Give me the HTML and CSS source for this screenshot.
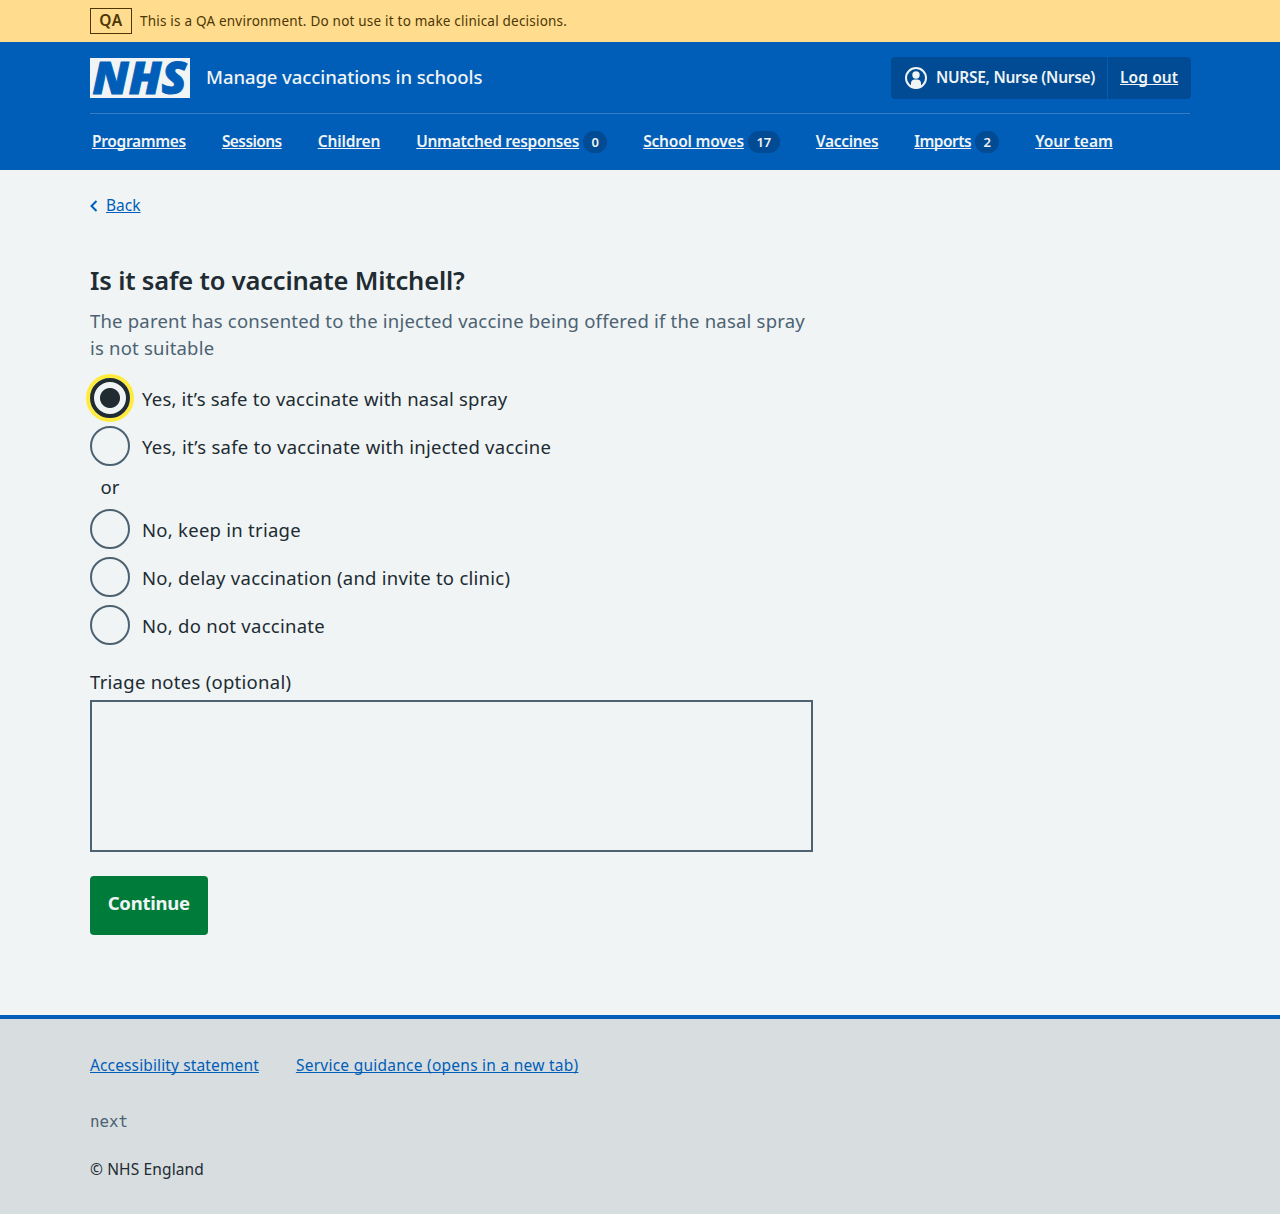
FILE: index.html
```html
<!DOCTYPE html>
<html lang="en">
<head>
<meta charset="utf-8">
<title>Is it safe to vaccinate Mitchell?</title>
<link rel="stylesheet" href="styles.css">
</head>
<body>
<div class="env-banner">
  <div class="container env-inner">
    <strong class="env-tag">QA</strong>
    <span class="env-text">This is a QA environment. Do not use it to make clinical decisions.</span>
  </div>
</div>
<header class="header">
  <div class="container">
    <div class="header-top">
      <svg class="logo" viewBox="0 0 100 40" width="100" height="40" role="img" aria-label="NHS">
        <rect width="100" height="40" fill="#f0f4f5"/>
        <text class="logo-text" x="2.500" y="36" textLength="94" lengthAdjust="spacingAndGlyphs">NHS</text>
      </svg>
      <span class="service-name">Manage vaccinations in schools</span>
      <div class="account">
        <div class="account-user">
          <svg class="account-icon" viewBox="0 0 24 24" width="24" height="24" aria-hidden="true">
            <defs><clipPath id="disc"><circle cx="12" cy="12" r="10.5"/></clipPath></defs>
            <circle cx="12" cy="12" r="10" fill="none" stroke="#f0f4f5" stroke-width="2"/>
            <circle cx="12" cy="9" r="3.7" fill="#f0f4f5"/>
            <path d="M7 24v-6.500a4 4 0 0 1 4-4h2a4 4 0 0 1 4 4V24z" fill="#f0f4f5" clip-path="url(#disc)"/>
          </svg>
          <span class="user-name">NURSE, Nurse (Nurse)</span>
        </div>
        <a class="logout" href="#">Log out</a>
      </div>
    </div>
    <nav class="nav">
      <div class="nav-item"><a class="nav-programmes" href="#">Programmes</a></div>
      <div class="nav-item"><a class="nav-sessions" href="#">Sessions</a></div>
      <div class="nav-item"><a class="nav-children" href="#">Children</a></div>
      <div class="nav-item"><a class="nav-responses" href="#">Unmatched responses</a><span class="count">0</span></div>
      <div class="nav-item"><a class="nav-moves" href="#">School moves</a><span class="count count-wide">17</span></div>
      <div class="nav-item"><a class="nav-vaccines" href="#">Vaccines</a></div>
      <div class="nav-item"><a class="nav-imports" href="#">Imports</a><span class="count">2</span></div>
      <div class="nav-item"><a class="nav-team" href="#">Your team</a></div>
    </nav>
  </div>
</header>
<div class="container page">
  <a class="back" href="#">
    <svg viewBox="0 0 8 12" width="8" height="12" aria-hidden="true"><path d="M6.500 1 1.500 6l5 5" fill="none" stroke="#005eb8" stroke-width="2"/></svg>
    <span class="back-text">Back</span>
  </a>
  <main class="main">
    <h1 class="title">Is it safe to vaccinate Mitchell?</h1>
    <p class="hint">The parent has consented to the injected vaccine being offered if the nasal spray<br>is not suitable</p>
    <div class="radios">
      <label class="radio"><span class="dot dot-on"></span><span class="radio-label radio-label-nasal">Yes, it’s safe to vaccinate with nasal spray</span></label>
      <label class="radio"><span class="dot"></span><span class="radio-label">Yes, it’s safe to vaccinate with injected vaccine</span></label>
      <div class="divider">or</div>
      <label class="radio"><span class="dot"></span><span class="radio-label">No, keep in triage</span></label>
      <label class="radio"><span class="dot"></span><span class="radio-label">No, delay vaccination (and invite to clinic)</span></label>
      <label class="radio"><span class="dot"></span><span class="radio-label">No, do not vaccinate</span></label>
    </div>
    <label class="notes-label" for="notes">Triage notes (optional)</label>
    <textarea class="notes" id="notes"></textarea>
    <button class="button">Continue</button>
  </main>
</div>
<footer class="footer">
  <div class="container">
    <div class="footer-links">
      <a class="link-accessibility" href="#">Accessibility statement</a>
      <a class="link-guidance" href="#">Service guidance (opens in a new tab)</a>
    </div>
    <p class="release">next</p>
    <p class="copyright">© NHS England</p>
  </div>
</footer>
</body>
</html>
```
FILE: styles.css
```css
* { box-sizing: border-box; }

body {
  margin: 0;
  min-height: 1214px;
  display: flex;
  flex-direction: column;
  background: #f0f4f5;
  color: #212b32;
  font-family: "Noto Sans", "Open Sans", sans-serif;
  font-size: 18.5px;
  line-height: 28px;
}

p, h1 { margin: 0; }

a {
  color: #005eb8;
  text-underline-offset: 1px;
  text-decoration-thickness: 1px;
  text-decoration-skip-ink: none;
}

.container { width: 1100px; margin: 0 auto; }

/* Environment banner */
.env-banner { background: #ffdc8e; color: #4d3705; height: 42px; }
.env-inner { display: flex; align-items: center; gap: 8px; height: 42px; }
.env-tag {
  width: 42px;
  height: 26px;
  border: 1px solid #4d3705;
  font-size: 15.5px;
  font-weight: 600;
  line-height: 23px;
  letter-spacing: 0.5px;
  text-align: center;
}
.env-text { font-size: 13.5px; letter-spacing: 0.21px; }

/* Header */
.header { background: #005eb8; color: #f0f4f5; height: 128px; }
.header a { color: #f0f4f5; }
.header-top {
  display: flex;
  align-items: center;
  height: 72px;
  border-bottom: 1px solid #337ec6;
}
.logo { overflow: visible; }
.logo-text {
  font-family: "Open Sans", "Noto Sans", sans-serif;
  font-size: 45px;
  font-weight: 800;
  font-style: italic;
  fill: #005eb8;
  stroke: #005eb8;
  stroke-width: 1px;
}
.service-name {
  margin-left: 16px;
  padding-bottom: 2px;
  font-weight: 500;
  letter-spacing: -0.08px;
}
.account {
  display: flex;
  width: 300px;
  height: 42px;
  margin: 0 -1px 0 auto;
  background: #004b93;
  border-radius: 4px;
  font-size: 15.5px;
  font-weight: 600;
}
.account-user {
  display: flex;
  align-items: center;
  width: 217px;
  padding-left: 13px;
  gap: 8px;
  border-right: 1px solid #005eb8;
  white-space: nowrap;
}
.user-name { padding-bottom: 2px; letter-spacing: -0.28px; }
.logout { flex: 1; padding-left: 12px; line-height: 41px; letter-spacing: 0.1px; }

.nav {
  display: flex;
  align-items: center;
  gap: 36px;
  height: 56px;
  padding-left: 2px;
  font-size: 15.5px;
  font-weight: 600;
}
.nav-item { display: flex; align-items: center; white-space: nowrap; }
.nav-item a { padding-bottom: 2px; }
.nav-programmes { letter-spacing: -0.33px; }
.nav-sessions { letter-spacing: -0.57px; }
.nav-children { letter-spacing: -0.13px; }
.nav-responses { letter-spacing: -0.31px; }
.nav-moves { letter-spacing: -0.2px; }
.nav-vaccines { letter-spacing: -0.33px; }
.nav-imports { letter-spacing: -0.53px; }
.nav-team { letter-spacing: -0.06px; }
.count {
  width: 24px;
  height: 22px;
  margin-left: 4px;
  border-radius: 11px;
  background: #004b93;
  font-size: 13px;
  line-height: 22px;
  text-align: center;
}
.count-wide { width: 32px; }

/* Page */
.back {
  display: flex;
  align-items: center;
  gap: 8px;
  height: 24px;
  margin-top: 24px;
  font-size: 15.5px;
  text-decoration: none;
}
.back-text {
  padding-bottom: 2px;
  text-decoration: underline 1px;
}

.main { width: 723px; margin-top: 44px; }
.title {
  font-size: 25.5px;
  font-weight: 600;
  line-height: 36px;
  letter-spacing: -0.17px;
}
.hint {
  margin-top: 9px;
  color: #4c6272;
  line-height: 27px;
  letter-spacing: 0.2px;
  white-space: nowrap;
}
.radios { margin-top: 17px; }
.radio {
  display: flex;
  align-items: center;
  gap: 12px;
  height: 40px;
  margin-bottom: 8px;
}
.radio-label { padding-top: 2px; letter-spacing: 0.26px; }
.radio-label-nasal { letter-spacing: 0.2px; }
.dot {
  flex: none;
  width: 40px;
  height: 40px;
  border: 2px solid #4c6272;
  border-radius: 50%;
}
.dot-on {
  border: 4px solid #212b32;
  box-shadow: 0 0 0 4px #ffeb3b;
  background: radial-gradient(circle, #212b32 9.500px, transparent 10.500px);
}
.divider {
  width: 40px;
  height: 27px;
  margin-bottom: 8px;
  line-height: 25px;
  text-align: center;
}
.notes-label {
  display: block;
  margin-top: 23px;
  line-height: 27px;
  letter-spacing: 0.27px;
}
.notes {
  display: block;
  width: 723px;
  height: 152px;
  margin-top: 5px;
  border: 2px solid #4c6272;
  border-radius: 0;
  background: transparent;
  resize: none;
}
.button {
  display: block;
  width: 117.5px;
  height: 59px;
  margin-top: 24px;
  padding: 0 0 6px;
  border: 0;
  border-radius: 4px;
  background: #007b3a;
  color: #f0f4f5;
  font: bold 18.5px "Noto Sans", sans-serif;
  letter-spacing: -0.27px;
}

/* Footer */
.footer {
  flex: 1;
  margin-top: 80px;
  border-top: 4px solid #005eb8;
  background: #d8dde0;
  font-size: 15.5px;
  line-height: 24px;
}
.footer-links { display: flex; gap: 37px; padding-top: 34px; }
.link-accessibility { letter-spacing: 0.13px; }
.link-guidance { letter-spacing: 0.25px; }
.release {
  margin-top: 33px;
  color: #4c6272;
  font-family: "DejaVu Sans Mono", monospace;
  font-size: 15.8px;
}
.copyright { margin-top: 23px; letter-spacing: 0.13px; }
```
